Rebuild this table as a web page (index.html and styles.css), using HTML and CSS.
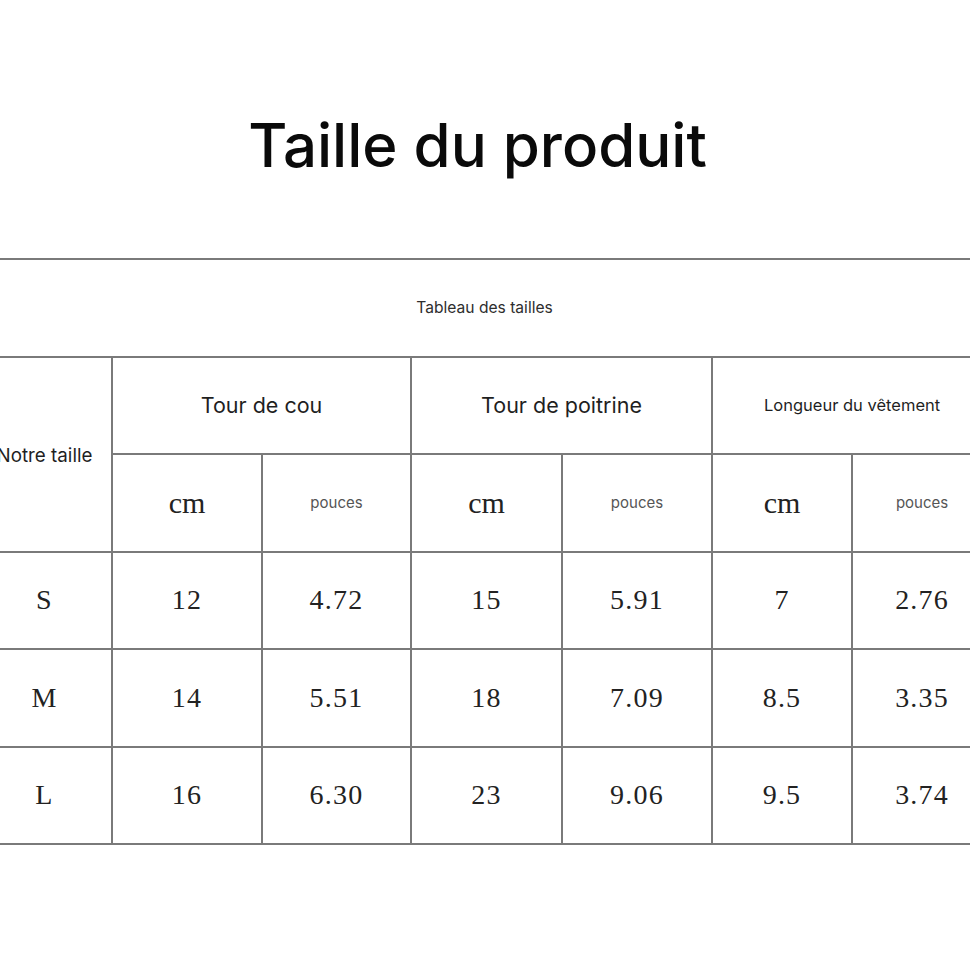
FILE: index.html
```html
<!DOCTYPE html>
<html lang="fr">
<head>
<meta charset="utf-8">
<title>Taille du produit</title>
<link rel="stylesheet" href="styles.css">
</head>
<body>
<h1 class="title">Taille du produit</h1>
<table class="sizes">
  <colgroup>
    <col class="c-size">
    <col class="c-150">
    <col class="c-149">
    <col class="c-151">
    <col class="c-150">
    <col class="c-140">
    <col class="c-140">
  </colgroup>
  <tr class="row caption-row">
    <td class="caption" colspan="7">Tableau des tailles</td>
  </tr>
  <tr class="row">
    <td class="head first" rowspan="2">Notre taille</td>
    <td class="head" colspan="2">Tour de cou</td>
    <td class="head" colspan="2">Tour de poitrine</td>
    <td class="head small" colspan="2">Longueur du vêtement</td>
  </tr>
  <tr class="row">
    <td class="unit">cm</td>
    <td class="inch">pouces</td>
    <td class="unit">cm</td>
    <td class="inch">pouces</td>
    <td class="unit">cm</td>
    <td class="inch">pouces</td>
  </tr>
  <tr class="row">
    <td class="num">S</td>
    <td class="num">12</td>
    <td class="num">4.72</td>
    <td class="num">15</td>
    <td class="num">5.91</td>
    <td class="num">7</td>
    <td class="num">2.76</td>
  </tr>
  <tr class="row">
    <td class="num">M</td>
    <td class="num">14</td>
    <td class="num">5.51</td>
    <td class="num">18</td>
    <td class="num">7.09</td>
    <td class="num">8.5</td>
    <td class="num">3.35</td>
  </tr>
  <tr class="row">
    <td class="num">L</td>
    <td class="num">16</td>
    <td class="num">6.30</td>
    <td class="num">23</td>
    <td class="num">9.06</td>
    <td class="num">9.5</td>
    <td class="num">3.74</td>
  </tr>
</table>
</body>
</html>
```
FILE: styles.css
```css
html, body {
  margin: 0;
  padding: 0;
  background: #ffffff;
}
body {
  width: 970px;
  overflow: hidden;
  font-family: Inter, "Noto Sans", sans-serif;
  color: #1f1f1f;
}
.title {
  margin: 115px 0 83px 0;
  padding-right: 15px;
  font-family: Inter, sans-serif;
  font-size: 60px;
  line-height: 60px;
  font-weight: 500;
  text-align: center;
  color: #0a0a0a;
}
.sizes {
  border-collapse: collapse;
  table-layout: fixed;
  width: 1015px;
  margin-left: -24px;
}
.c-size { width: 135px; }
.c-150 { width: 150px; }
.c-149 { width: 149px; }
.c-151 { width: 151px; }
.c-140 { width: 140px; }
.sizes td {
  border: 2px solid #7a7a7a;
  text-align: center;
  vertical-align: middle;
  padding: 0;
}
.row {
  height: 97.5px;
}
.caption {
  font-size: 15.6px;
  color: #2e2e2e;
  padding-top: 2px;
}
.head {
  font-size: 21.5px;
  color: #1f1f1f;
  padding-top: 4px;
}
.head.small {
  font-size: 16.5px;
}
.head.first {
  font-size: 18.8px;
  padding-top: 2px;
}
.unit {
  font-family: "Liberation Serif", "Times New Roman", serif;
  font-size: 30px;
  color: #222;
  padding-top: 9px;
}
.inch {
  font-size: 15px;
  color: #555;
}
.num {
  font-family: "Liberation Serif", "Times New Roman", serif;
  font-size: 28px;
  color: #222;
  padding-top: 9px;
  letter-spacing: 1.2px;
}
```
